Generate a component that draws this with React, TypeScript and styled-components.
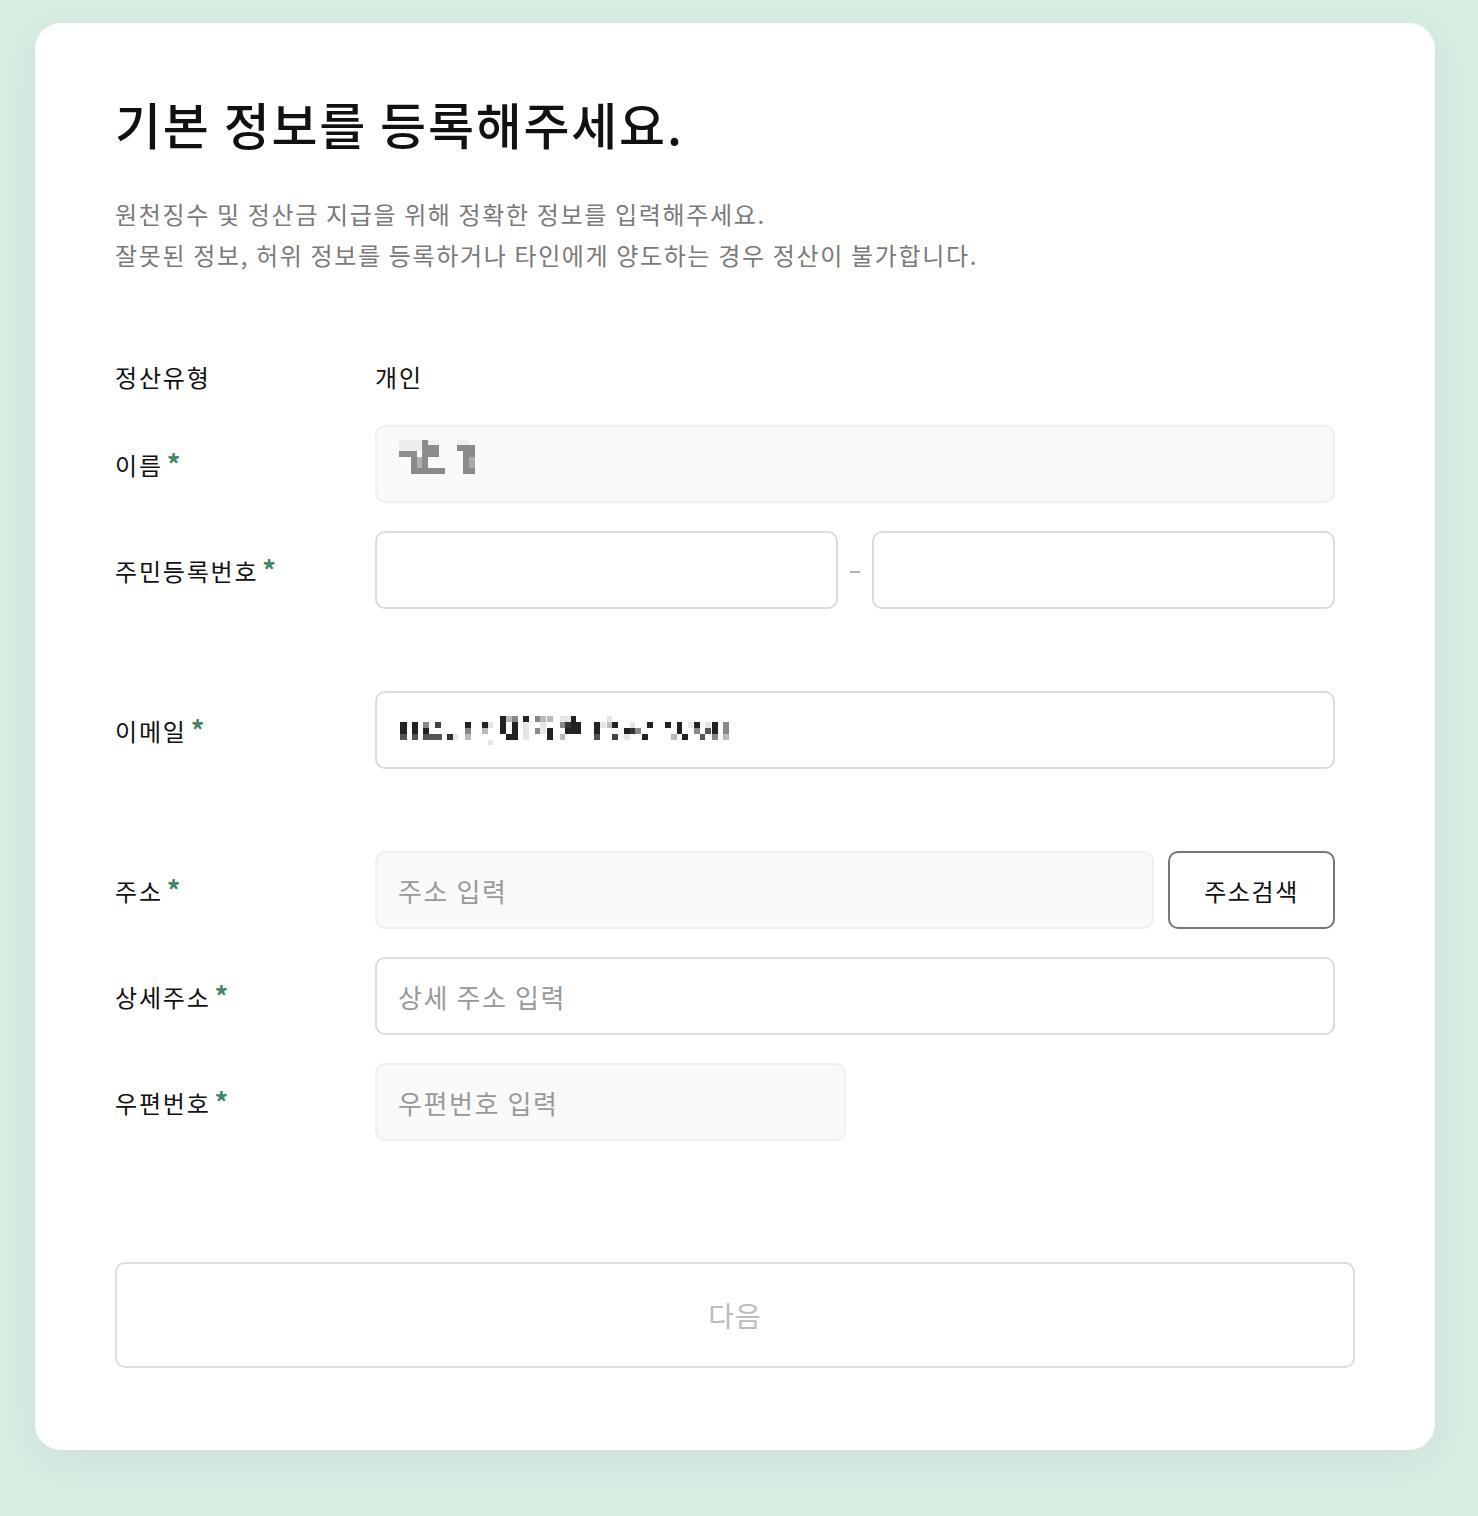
import React from "react";
import styled, { createGlobalStyle } from "styled-components";

const GlobalStyle = createGlobalStyle`
  html, body {
    margin: 0;
    padding: 0;
    background: #d9ede3;
  }
  body {
    font-family: "Noto Sans CJK KR", "Noto Sans", sans-serif;
    color: #111;
  }
  * { box-sizing: border-box; }
`;

const Page = styled.div`
  min-height: 1516px;
  padding: 23px 0 66px 35px;
  background: #d9ede3;
`;

const Card = styled.main`
  width: 1400px;
  background: #ffffff;
  border-radius: 26px;
  padding: 69px 80px 82px 80px;
  box-shadow: 0 10px 44px rgba(40, 90, 60, 0.08);
`;

const Title = styled.h1`
  margin: 0;
  font-size: 50px;
  line-height: 62px;
  font-weight: 500;
  color: #111;
  letter-spacing: 1.8px;
`;

const Subtitle = styled.p`
  margin: 39px 0 0 0;
  font-size: 24px;
  line-height: 41px;
  font-weight: 400;
  color: #7a7a7a;
  letter-spacing: 1.65px;
`;

const Form = styled.div`
  width: 1220px;
  margin-top: 82px;
  display: flex;
  flex-direction: column;
`;

const Row = styled.div<{ $gap?: number; $h?: number }>`
  display: grid;
  grid-template-columns: 260px 1fr;
  align-items: center;
  min-height: ${(p) => p.$h ?? 78}px;
  margin-top: ${(p) => p.$gap ?? 0}px;
`;

const Label = styled.div`
  font-size: 24px;
  line-height: 40px;
  color: #111;
  letter-spacing: 1.8px;
  display: flex;
  align-items: baseline;
`;

const Star = styled.span`
  color: #3f8766;
  font-weight: 700;
  font-size: 27px;
  line-height: 40px;
  margin-left: 4px;
`;

const Value = styled.div`
  font-size: 24px;
  line-height: 40px;
  color: #111;
  letter-spacing: 1.8px;
`;

const Input = styled.input<{ $disabled?: boolean; $width?: number }>`
  height: 78px;
  width: ${(p) => (p.$width ? `${p.$width}px` : "100%")};
  min-width: 0;
  flex: ${(p) => (p.$width ? "0 0 auto" : "1 1 0")};
  border-radius: 10px;
  border: ${(p) => (p.$disabled ? "2px solid #efefef" : "2px solid #dadddd")};
  background: ${(p) => (p.$disabled ? "#f9f9f9" : "#ffffff")};
  padding: 0 0 0 21px;
  font-family: "Noto Sans CJK KR", "Noto Sans", sans-serif;
  font-size: 26px;
  letter-spacing: 1.6px;
  color: #111;
  outline: none;
  &::placeholder {
    color: #999;
  }
`;

const FilledBox = styled.div<{ $disabled?: boolean }>`
  height: 78px;
  width: 100%;
  border-radius: 10px;
  border: ${(p) => (p.$disabled ? "2px solid #efefef" : "2px solid #dadddd")};
  background: ${(p) => (p.$disabled ? "#f9f9f9" : "#ffffff")};
  padding-left: 22px;
  display: flex;
  align-items: center;
`;

const Split = styled.div`
  display: flex;
  align-items: center;
`;

const Dash = styled.span`
  width: 34px;
  display: flex;
  justify-content: center;
  padding-top: 4px;
  &::before {
    content: "";
    width: 10px;
    height: 2px;
    background: #b5b5b5;
  }
`;

const Inline = styled.div`
  display: flex;
  align-items: center;
  gap: 14px;
`;

const SearchButton = styled.button`
  width: 167px;
  height: 78px;
  flex: 0 0 auto;
  border: 2px solid #777;
  border-radius: 10px;
  background: #fff;
  font-family: "Noto Sans CJK KR", "Noto Sans", sans-serif;
  font-size: 24px;
  letter-spacing: 1.6px;
  color: #111;
  padding: 0;
  cursor: pointer;
`;

const NextButton = styled.button`
  margin-top: 121px;
  width: 1240px;
  height: 106px;
  border: 2px solid #dddddd;
  border-radius: 10px;
  background: #fff;
  font-family: "Noto Sans CJK KR", "Noto Sans", sans-serif;
  font-size: 28px;
  letter-spacing: 1px;
  color: #bdbdbd;
  display: block;
`;

type R = [number, number, number, number, string];

const Mosaic: React.FC<{ rects: R[]; width: number; offsetY: number }> = ({ rects, width, offsetY }) => (
  <svg width={width} height={48} viewBox={`0 0 ${width} 48`} shapeRendering="crispEdges">
    {rects.map(([x, y, w, h, c], i) => (
      <rect key={i} x={x} y={y + offsetY} width={w} height={h} fill={c} />
    ))}
  </svg>
);

const nameRects: R[] = [
  [0, 0, 23, 11, "#eeeeee"],
  [29, 0, 11, 5, "#f0f0f0"],
  [23, 0, 6, 34, "#8c8c8c"],
  [29, 5, 11, 12, "#8c8c8c"],
  [0, 11, 18, 6, "#8e8e8e"],
  [12, 17, 11, 17, "#8a8a8a"],
  [18, 17, 5, 11, "#b0b0b0"],
  [12, 28, 34, 6, "#8a8a8a"],
  [58, 0, 12, 5, "#eeeeee"],
  [58, 5, 18, 6, "#8a8a8a"],
  [64, 11, 12, 23, "#8a8a8a"],
  [70, 17, 6, 11, "#ababab"],
];

const D = "#222";
const G = "#555";
const M = "#888";
const L = "#bbb";
const V = "#e6e6e6";

const emailRects: R[] = [
  [1, 6, 7, 12, D], [1, 18, 7, 6, G],
  [13, 6, 6, 12, D], [13, 18, 6, 6, G],
  [24, 6, 6, 6, M], [24, 12, 6, 6, D], [24, 18, 6, 6, G],
  [30, 18, 13, 6, G], [36, 6, 6, 6, "#444"],
  [48, 18, 6, 6, "#333"], [54, 18, 5, 6, V],
  [66, 6, 6, 6, D], [66, 12, 6, 6, M], [66, 18, 6, 6, L],
  [83, 6, 6, 6, D], [83, 12, 6, 6, L], [89, 6, 5, 6, V], [89, 24, 5, 5, V],
  [101, 0, 6, 18, D], [107, 0, 6, 6, L], [113, 0, 6, 6, M], [113, 6, 6, 12, D], [107, 18, 12, 6, D],
  [124, 0, 6, 6, D], [124, 6, 6, 18, V],
  [136, 0, 6, 6, M], [136, 12, 6, 6, M],
  [141, 0, 6, 6, L], [141, 6, 6, 12, V],
  [148, 0, 6, 6, L], [148, 12, 6, 6, D], [148, 18, 6, 6, D],
  [161, 0, 5, 6, V], [161, 6, 5, 6, M], [161, 18, 5, 6, L],
  [166, 0, 6, 6, V], [166, 6, 6, 6, "#333"], [166, 12, 6, 6, D],
  [172, 0, 5, 6, D], [172, 6, 10, 12, D],
  [195, 6, 6, 12, D], [195, 18, 6, 6, G],
  [201, 6, 6, 6, V],
  [208, 0, 5, 6, V], [208, 6, 5, 6, L],
  [213, 6, 6, 6, D], [213, 18, 6, 6, "#444"],
  [225, 12, 6, 6, D], [225, 18, 6, 6, V],
  [231, 6, 5, 6, V], [231, 12, 5, 6, "#333"],
  [236, 12, 6, 6, M],
  [243, 18, 6, 6, D],
  [248, 6, 6, 6, D],
  [266, 6, 6, 6, D],
  [272, 18, 6, 6, L],
  [278, 6, 5, 12, D],
  [283, 18, 6, 6, D],
  [289, 6, 5, 6, V],
  [295, 6, 6, 6, D], [295, 12, 6, 6, M],
  [301, 18, 5, 6, G],
  [306, 6, 6, 6, V], [306, 12, 6, 6, G],
  [313, 6, 6, 12, D], [313, 18, 6, 6, M],
  [324, 6, 6, 12, M], [324, 18, 6, 6, L],
];

const Req: React.FC<{ children: React.ReactNode }> = ({ children }) => (
  <Label>
    {children}
    <Star>*</Star>
  </Label>
);

export default function App() {
  return (
    <>
      <GlobalStyle />
      <Page>
        <Card>
          <Title>기본 정보를 등록해주세요.</Title>
          <Subtitle>
            원천징수 및 정산금 지급을 위해 정확한 정보를 입력해주세요.
            <br />
            잘못된 정보, 허위 정보를 등록하거나 타인에게 양도하는 경우 정산이 불가합니다.
          </Subtitle>
          <Form>
            <Row $h={40}>
              <Label>정산유형</Label>
              <Value>개인</Value>
            </Row>
            <Row $gap={28}>
              <Req>이름</Req>
              <FilledBox $disabled>
                <Mosaic rects={nameRects} width={80} offsetY={0} />
              </FilledBox>
            </Row>
            <Row $gap={28}>
              <Req>주민등록번호</Req>
              <Split>
                <Input type="text" />
                <Dash />
                <Input type="password" />
              </Split>
            </Row>
            <Row $gap={82}>
              <Req>이메일</Req>
              <FilledBox>
                <Mosaic rects={emailRects} width={340} offsetY={10} />
              </FilledBox>
            </Row>
            <Row $gap={82}>
              <Req>주소</Req>
              <Inline>
                <Input $disabled readOnly placeholder="주소 입력" />
                <SearchButton type="button">주소검색</SearchButton>
              </Inline>
            </Row>
            <Row $gap={28}>
              <Req>상세주소</Req>
              <Input placeholder="상세 주소 입력" />
            </Row>
            <Row $gap={28}>
              <Req>우편번호</Req>
              <div>
                <Input $disabled readOnly placeholder="우편번호 입력" $width={471} />
              </div>
            </Row>
          </Form>
          <NextButton type="button" disabled>
            다음
          </NextButton>
        </Card>
      </Page>
    </>
  );
}
